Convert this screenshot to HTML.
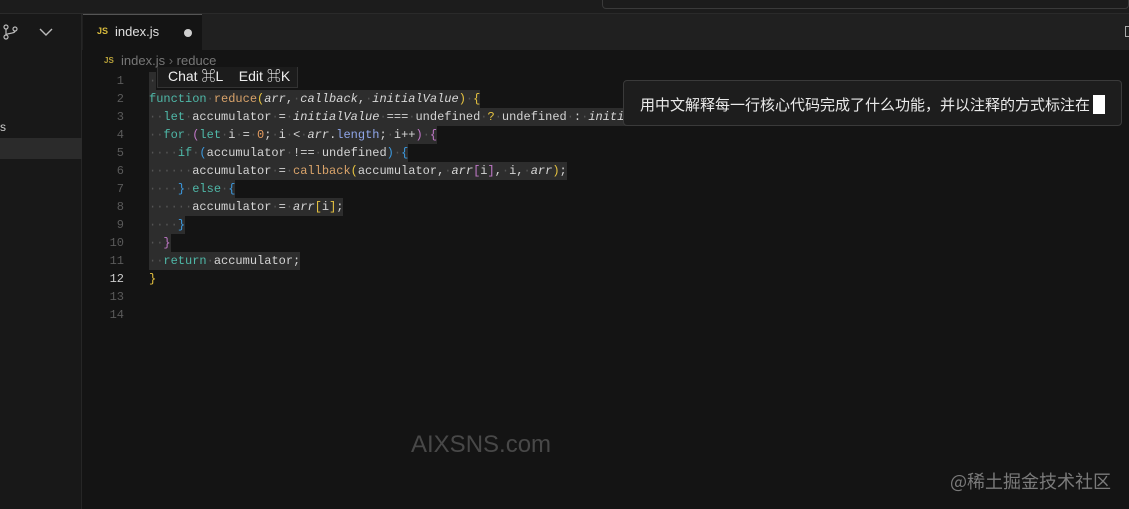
<!DOCTYPE html>
<html><head><meta charset="utf-8"><style>
*{margin:0;padding:0;box-sizing:border-box}
body{width:1129px;height:509px;background:#141414;position:relative;overflow:hidden;font-family:"Liberation Sans","Noto Sans CJK SC",sans-serif}
.abs{position:absolute}
.code{font-family:"Liberation Mono","DejaVu Sans Mono",monospace;font-size:12px;line-height:18px;white-space:pre;color:#d4d4d4}
.ln{position:absolute;left:100px;width:24px;text-align:right;color:#5a5a5a;font-family:"Liberation Mono",monospace;font-size:12px;line-height:18px}
.l{position:absolute;left:149px;height:18px}
.s{background:#2d2d2d}
.d{color:#555}
.k{color:#4fb8a8}.f{color:#d9a36a}.p{font-style:italic;color:#d8d8d8}.y{color:#e8c440}.m{color:#c178c8}.b{color:#3c9ae0}.n{color:#e49b5f}.pr{color:#8fa5e8}
</style></head><body>
<div class="abs" style="left:0;top:0;width:1129px;height:14px;background:#1c1c1c;border-bottom:1px solid #2a2a2a"></div>
<div class="abs" style="left:602px;top:0;width:527px;height:9px;border:1px solid #3a3a3a;border-top:none;border-radius:0 0 4px 4px"></div>
<div class="abs" style="left:0;top:14px;width:1129px;height:36px;background:#202020"></div>
<div class="abs" style="left:0;top:14px;width:82px;height:495px;background:#181818;border-right:1px solid #262626"></div>
<svg class="abs" style="left:2px;top:23px" width="18" height="18" viewBox="0 0 18 18" fill="none" stroke="#bbb" stroke-width="1.2"><circle cx="4" cy="4" r="2"/><circle cx="4" cy="14" r="2"/><circle cx="13" cy="6" r="2"/><path d="M4 6v6M13 8c0 3-9 2-9 4"/></svg>
<svg class="abs" style="left:38px;top:27px" width="16" height="10" viewBox="0 0 16 10" fill="none" stroke="#bbb" stroke-width="1.4"><path d="M2 2l6 6 6-6"/></svg>
<div class="abs" style="left:0;top:120px;color:#ccc;font-size:12px">s</div>
<div class="abs" style="left:0;top:138px;width:82px;height:21px;background:#2b2b2b"></div>
<div class="abs" style="left:83px;top:14px;width:119px;height:36px;background:#141414;border-top:1px solid #555"></div>
<div class="abs" style="left:97px;top:26px;color:#d6b93c;font-size:9px;font-weight:bold">JS</div>
<div class="abs" style="left:115px;top:24px;color:#e0e0e0;font-size:13px">index.js</div>
<div class="abs" style="left:184px;top:29px;width:8px;height:8px;border-radius:50%;background:#cfcfcf"></div>
<div class="abs" style="left:1125px;top:26px;width:8px;height:11px;border:1px solid #aaa"></div>
<div class="abs" style="left:104px;top:56px;color:#b9a23a;font-size:8px;font-weight:bold">JS</div>
<div class="abs" style="left:121px;top:53px;color:#777;font-size:13px">index.js <span style="color:#666">›</span> reduce</div>

<div class="ln" style="top:72px">1</div><div class="ln" style="top:90px">2</div><div class="ln" style="top:108px">3</div><div class="ln" style="top:126px">4</div><div class="ln" style="top:144px">5</div><div class="ln" style="top:162px">6</div><div class="ln" style="top:180px">7</div><div class="ln" style="top:198px">8</div><div class="ln" style="top:216px">9</div><div class="ln" style="top:234px">10</div><div class="ln" style="top:252px">11</div><div class="ln" style="top:270px;color:#ccc">12</div><div class="ln" style="top:288px">13</div><div class="ln" style="top:306px">14</div>

<div class="code">
<div class="l s" style="top:72px"><span class="d">·</span></div>
<div class="l s" style="top:90px"><span class="k">function</span><span class="d">·</span><span class="f">reduce</span><span class="y">(</span><span class="p">arr</span>,<span class="d">·</span><span class="p">callback</span>,<span class="d">·</span><span class="p">initialValue</span><span class="y">)</span><span class="d">·</span><span class="y">{</span></div>
<div class="l s" style="top:108px"><span class="d">··</span><span class="k">let</span><span class="d">·</span>accumulator<span class="d">·</span>=<span class="d">·</span><span class="p">initialValue</span><span class="d">·</span>===<span class="d">·</span>undefined<span class="d">·</span><span class="y">?</span><span class="d">·</span>undefined<span class="d">·</span>:<span class="d">·</span><span class="p">initialValue</span>;</div>
<div class="l s" style="top:126px"><span class="d">··</span><span class="k">for</span><span class="d">·</span><span class="m">(</span><span class="k">let</span><span class="d">·</span>i<span class="d">·</span>=<span class="d">·</span><span class="n">0</span>;<span class="d">·</span>i<span class="d">·</span>&lt;<span class="d">·</span><span class="p">arr</span>.<span class="pr">length</span>;<span class="d">·</span>i++<span class="m">)</span><span class="d">·</span><span class="m">{</span></div>
<div class="l s" style="top:144px"><span class="d">····</span><span class="k">if</span><span class="d">·</span><span class="b">(</span>accumulator<span class="d">·</span>!==<span class="d">·</span>undefined<span class="b">)</span><span class="d">·</span><span class="b">{</span></div>
<div class="l s" style="top:162px"><span class="d">······</span>accumulator<span class="d">·</span>=<span class="d">·</span><span class="f">callback</span><span class="y">(</span>accumulator,<span class="d">·</span><span class="p">arr</span><span class="m">[</span>i<span class="m">]</span>,<span class="d">·</span>i,<span class="d">·</span><span class="p">arr</span><span class="y">)</span>;</div>
<div class="l s" style="top:180px"><span class="d">····</span><span class="b">}</span><span class="d">·</span><span class="k">else</span><span class="d">·</span><span class="b">{</span></div>
<div class="l s" style="top:198px"><span class="d">······</span>accumulator<span class="d">·</span>=<span class="d">·</span><span class="p">arr</span><span class="y">[</span>i<span class="y">]</span>;</div>
<div class="l s" style="top:216px"><span class="d">····</span><span class="b">}</span></div>
<div class="l s" style="top:234px"><span class="d">··</span><span class="m">}</span></div>
<div class="l s" style="top:252px"><span class="d">··</span><span class="k">return</span><span class="d">·</span>accumulator;</div>
<div class="l" style="top:270px"><span class="y">}</span></div>
</div>

<div class="abs" style="left:157px;top:67px;width:141px;height:21px;background:#1c1c1c;border:1px solid #333;border-top:none;overflow:hidden">
<div style="position:absolute;left:10px;top:-1px;color:#eee;font-size:14px;white-space:nowrap">Chat ⌘L&nbsp;&nbsp;&nbsp;&nbsp;Edit ⌘K</div></div>

<div class="abs" style="left:623px;top:80px;width:499px;height:46px;background:#1d1d1d;border:1px solid #3a3a3a;border-radius:4px"></div>
<div class="abs" style="left:640px;top:96px;color:#eaeaea;font-size:15px;white-space:nowrap;font-family:'Noto Sans CJK SC',sans-serif;line-height:18px">用中文解释每一行核心代码完成了什么功能，并以注释的方式标注在</div>
<div class="abs" style="left:1093px;top:95px;width:12px;height:19px;background:#fff"></div>

<div class="abs" style="left:411px;top:431px;color:#484848;font-size:24px">AIXSNS.com</div>
<div class="abs" style="left:950px;top:468px;color:#7a7a7a;font-size:18px;font-family:'Noto Sans CJK SC',sans-serif">@稀土掘金技术社区</div>
</body></html>
